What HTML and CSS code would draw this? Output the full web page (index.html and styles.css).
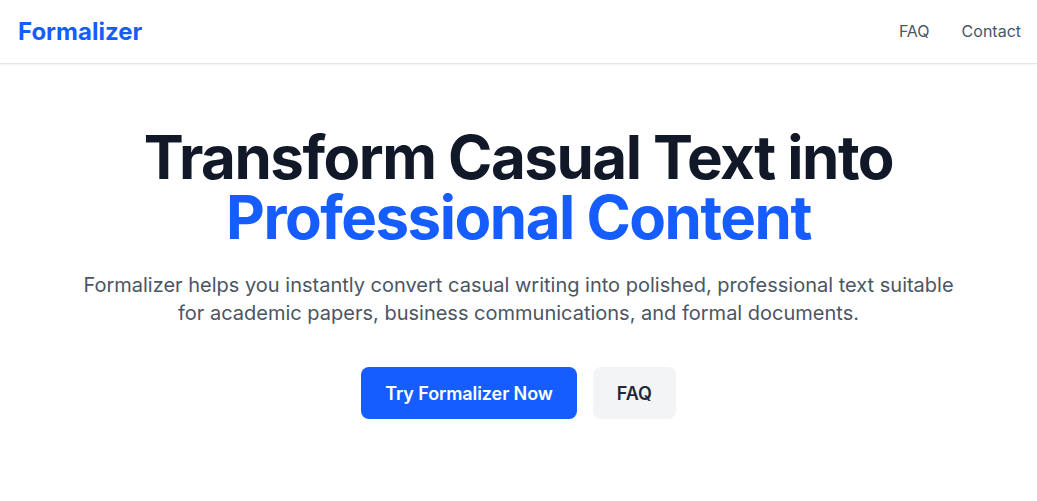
FILE: index.html
```html
<!DOCTYPE html>
<html lang="en">
<head>
<meta charset="utf-8">
<title>Formalizer</title>
<link rel="stylesheet" href="styles.css">
</head>
<body>
<header class="site-header">
  <a class="logo" href="#">Formalizer</a>
  <nav class="nav">
    <a href="#">FAQ</a>
    <a href="#">Contact</a>
  </nav>
</header>
<main class="hero">
  <h1 class="hero-title">Transform Casual Text into <span class="accent">Professional Content</span></h1>
  <p class="hero-text">Formalizer helps you instantly convert casual writing into polished, professional text suitable for academic papers, business communications, and formal documents.</p>
  <div class="actions">
    <a class="btn btn-primary" href="#">Try Formalizer Now</a>
    <a class="btn btn-secondary" href="#">FAQ</a>
  </div>
</main>
</body>
</html>
```
FILE: styles.css
```css
* { box-sizing: border-box; }
html, body { margin: 0; padding: 0; }
body {
  font-family: Inter, "Noto Sans", "Liberation Sans", sans-serif;
  background: #ffffff;
  color: #111827;
}
a { text-decoration: none; }
.site-header {
  height: 64px;
  display: flex;
  align-items: center;
  justify-content: space-between;
  padding: 0 16px 1px 18px;
  border-bottom: 1px solid #e5e7eb;
  box-shadow: 0 1px 2px rgba(0,0,0,0.05);
}
.logo {
  font-size: 24px;
  font-weight: 700;
  color: #165dff;
}
.nav {
  display: flex;
  gap: 32px;
}
.nav a {
  font-size: 16px;
  color: #4b5563;
}
.hero {
  display: flex;
  flex-direction: column;
  align-items: center;
  text-align: center;
  padding: 63px 16px 0;
}
.hero-title {
  margin: 0;
  font-size: 60px;
  line-height: 1;
  font-weight: 700;
  letter-spacing: -1.5px;
  color: #111827;
  max-width: 900px;
}
.accent {
  display: block;
  color: #165dff;
}
.hero-text {
  margin: 24px 0 0;
  max-width: 896px;
  font-size: 20px;
  line-height: 28px;
  color: #4b5563;
}
.actions {
  display: flex;
  gap: 16px;
  margin-top: 40px;
}
.btn {
  display: inline-flex;
  align-items: center;
  justify-content: center;
  height: 52px;
  padding: 0 24px;
  font-size: 18px;
  font-weight: 600;
  letter-spacing: -0.1px;
  border-radius: 8px;
}
.btn-primary {
  background: #165dff;
  color: #ffffff;
}
.btn-secondary {
  background: #f3f4f6;
  color: #1f2937;
}
```
